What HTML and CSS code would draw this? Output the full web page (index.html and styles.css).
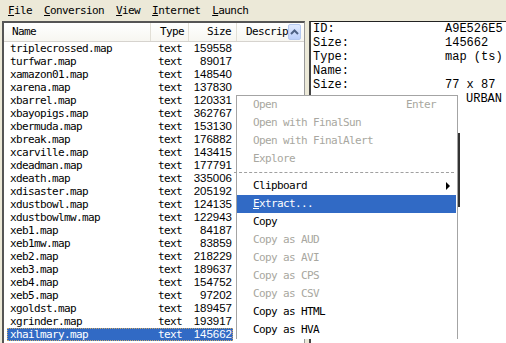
FILE: index.html
```html
<!DOCTYPE html>
<html lang="en">
<head>
    <meta charset="UTF-8">
    <title>XCC Mixer</title>
    <link rel="stylesheet" href="styles.css">
</head>
<body>
    <div class="menubar">
        <span class="mitem"><u>F</u>ile</span>
        <span class="mitem"><u>C</u>onversion</span>
        <span class="mitem"><u>V</u>iew</span>
        <span class="mitem"><u>I</u>nternet</span>
        <span class="mitem"><u>L</u>aunch</span>
    </div>

    <div class="main">
        <div class="listbox">
            <div class="lhead">
                <div class="hc c-name">Name</div>
                <div class="hc c-type">Type</div>
                <div class="hc c-size">Size</div>
                <div class="hc c-desc">Descrip</div>
                <div class="sb-up">
                    <svg width="9" height="6" viewBox="0 0 9 6"><path d="M1 5 L4.5 1.5 L8 5" fill="none" stroke="#4d6185" stroke-width="2"/></svg>
                </div>
            </div>
            <div class="rows">
                <div class="row"><span class="name">triplecrossed.map</span><span class="type">text</span><span class="size">159558</span></div>
                <div class="row"><span class="name">turfwar.map</span><span class="type">text</span><span class="size">89017</span></div>
                <div class="row"><span class="name">xamazon01.map</span><span class="type">text</span><span class="size">148540</span></div>
                <div class="row"><span class="name">xarena.map</span><span class="type">text</span><span class="size">137830</span></div>
                <div class="row"><span class="name">xbarrel.map</span><span class="type">text</span><span class="size">120331</span></div>
                <div class="row"><span class="name">xbayopigs.map</span><span class="type">text</span><span class="size">362767</span></div>
                <div class="row"><span class="name">xbermuda.map</span><span class="type">text</span><span class="size">153130</span></div>
                <div class="row"><span class="name">xbreak.map</span><span class="type">text</span><span class="size">176882</span></div>
                <div class="row"><span class="name">xcarville.map</span><span class="type">text</span><span class="size">143415</span></div>
                <div class="row"><span class="name">xdeadman.map</span><span class="type">text</span><span class="size">177791</span></div>
                <div class="row"><span class="name">xdeath.map</span><span class="type">text</span><span class="size">335006</span></div>
                <div class="row"><span class="name">xdisaster.map</span><span class="type">text</span><span class="size">205192</span></div>
                <div class="row"><span class="name">xdustbowl.map</span><span class="type">text</span><span class="size">124135</span></div>
                <div class="row"><span class="name">xdustbowlmw.map</span><span class="type">text</span><span class="size">122943</span></div>
                <div class="row"><span class="name">xeb1.map</span><span class="type">text</span><span class="size">84187</span></div>
                <div class="row"><span class="name">xeb1mw.map</span><span class="type">text</span><span class="size">83859</span></div>
                <div class="row"><span class="name">xeb2.map</span><span class="type">text</span><span class="size">218229</span></div>
                <div class="row"><span class="name">xeb3.map</span><span class="type">text</span><span class="size">189637</span></div>
                <div class="row"><span class="name">xeb4.map</span><span class="type">text</span><span class="size">154752</span></div>
                <div class="row"><span class="name">xeb5.map</span><span class="type">text</span><span class="size">97202</span></div>
                <div class="row"><span class="name">xgoldst.map</span><span class="type">text</span><span class="size">189457</span></div>
                <div class="row"><span class="name">xgrinder.map</span><span class="type">text</span><span class="size">193917</span></div>
                <div class="row selected"><span class="name">xhailmary.map</span><span class="type">text</span><span class="size">145662</span></div>
            </div>
        </div>

        <div class="splitter"></div>

        <div class="info">
            <div class="irow"><span class="lbl">ID:</span><span class="val">A9E526E5</span></div>
            <div class="irow"><span class="lbl">Size:</span><span class="val">145662</span></div>
            <div class="irow"><span class="lbl">Type:</span><span class="val">map (ts)</span></div>
            <div class="irow"><span class="lbl">Name:</span><span class="val"></span></div>
            <div class="irow"><span class="lbl">Size:</span><span class="val">77 x 87</span></div>
            <div class="irow"><span class="lbl"></span><span class="val far">URBAN</span></div>
            <div class="preview"></div>
        </div>
    </div>

    <div class="ctx">
        <div class="ci off"><span>Open</span><span class="key">Enter</span></div>
        <div class="ci off"><span>Open with FinalSun</span></div>
        <div class="ci off"><span>Open with FinalAlert</span></div>
        <div class="ci off"><span>Explore</span></div>
        <div class="sep"></div>
        <div class="ci"><span>Clipboard</span><span class="arrow"></span></div>
        <div class="ci hl"><span><u>E</u>xtract...</span></div>
        <div class="ci"><span>Copy</span></div>
        <div class="ci off"><span>Copy as AUD</span></div>
        <div class="ci off"><span>Copy as AVI</span></div>
        <div class="ci off"><span>Copy as CPS</span></div>
        <div class="ci off"><span>Copy as CSV</span></div>
        <div class="ci"><span>Copy as HTML</span></div>
        <div class="ci"><span>Copy as HVA</span></div>
    </div>
</body>
</html>
```

FILE: styles.css
```css
body {
    margin: 0;
    width: 506px;
    height: 343px;
    overflow: hidden;
    background-color: #ece9d8;
    font-family: "DejaVu Sans Mono", monospace;
    font-size: 11px;
    letter-spacing: -0.62px;
    color: #000;
}
u {
    text-decoration: underline;
    text-underline-offset: 1px;
}

/* menu bar */
.menubar {
    height: 21px;
    display: flex;
    align-items: center;
    padding-left: 2px;
    box-sizing: border-box;
}
.mitem {
    padding: 0 6px;
    line-height: 18px;
}

/* layout */
.main {
    display: flex;
    height: 322px;
    padding-left: 2px;
}
.splitter {
    width: 4px;
    flex: none;
}

/* file list */
.listbox {
    width: 303px;
    flex: none;
    box-sizing: border-box;
    background-color: #fff;
    border-top: 2px solid #555;
    border-left: 2px solid #555;
    border-right: 1px solid #999;
    overflow: hidden;
}
.lhead {
    display: flex;
    height: 19px;
    box-sizing: border-box;
    border-bottom: 1px solid #d6d3ce;
    background: linear-gradient(#fff, #f7f6f1);
}
.hc {
    box-sizing: border-box;
    line-height: 18px;
    border-right: 1px solid #e2dfd6;
    white-space: nowrap;
    overflow: hidden;
}
.c-name { width: 147px; padding-left: 8px; }
.c-type { width: 38px; padding-left: 9px; }
.c-size { width: 48px; text-align: right; padding-right: 5px; }
.c-desc { width: 51px; padding-left: 9px; border-right: none; }
.sb-up {
    width: 13px;
    height: 16px;
    margin-top: 1px;
    box-sizing: border-box;
    border: 1px solid #b5c9f0;
    border-radius: 2px;
    background: linear-gradient(#dfe9fe, #bcd0fb);
    display: flex;
    align-items: center;
    justify-content: center;
}

.row {
    display: flex;
    height: 13px;
    line-height: 13px;
    width: 226px;
    margin-left: 3px;
    white-space: nowrap;
}
.row .name { width: 144px; padding-left: 3px; box-sizing: border-box; }
.row .type { width: 38px; padding-left: 7px; box-sizing: border-box; }
.row .size {
    width: 44px;
    text-align: right;
    padding-right: 1px;
    box-sizing: border-box;
    font-family: "Liberation Sans", Arial, sans-serif;
    font-size: 11.5px;
    letter-spacing: 0;
}
.row.selected {
    background-color: #316ac5;
    color: #fff;
    outline: 1px dotted #c9a76a;
    outline-offset: -1px;
}

/* info panel */
.info {
    flex: 1;
    background-color: #fff;
    border-top: 1px solid #222;
    border-left: 2px solid #444;
    padding-left: 2px;
    font-family: "Courier New", "Liberation Mono", "Cousine", monospace;
    font-size: 12px;
    letter-spacing: 0;
    overflow: hidden;
}
.irow {
    display: flex;
    height: 14px;
    line-height: 14px;
    white-space: nowrap;
}
.lbl { width: 132px; }
.val { flex: 1; }
.val.far { text-align: right; padding-right: 4px; }
.preview {
    margin-top: 27px;
    margin-left: 145px;
    width: 0;
    height: 74px;
    border-left: 2px solid #333;
}

/* context menu */
.ctx {
    position: absolute;
    left: 236px;
    top: 95px;
    width: 222px;
    box-sizing: border-box;
    background-color: #fff;
    border: 1px solid #a4a4a4;
    border-bottom: none;
    padding-right: 1px;
}
.ci {
    position: relative;
    display: flex;
    justify-content: space-between;
    height: 18px;
    line-height: 18px;
    padding-left: 16px;
    padding-right: 20px;
    white-space: nowrap;
}
.ci.off {
    color: #a8a7a0;
}
.ci.hl {
    background-color: #316ac5;
    color: #fff;
}
.arrow {
    position: absolute;
    right: 6px;
    top: 5px;
    border-left: 4px solid #000;
    border-top: 4px solid transparent;
    border-bottom: 4px solid transparent;
}
.sep {
    height: 9px;
    box-sizing: border-box;
    border-bottom: 1px dashed #a0a0a0;
    margin: 0 2px 0 -3px;
    transform: translateY(-4px);
}
```
